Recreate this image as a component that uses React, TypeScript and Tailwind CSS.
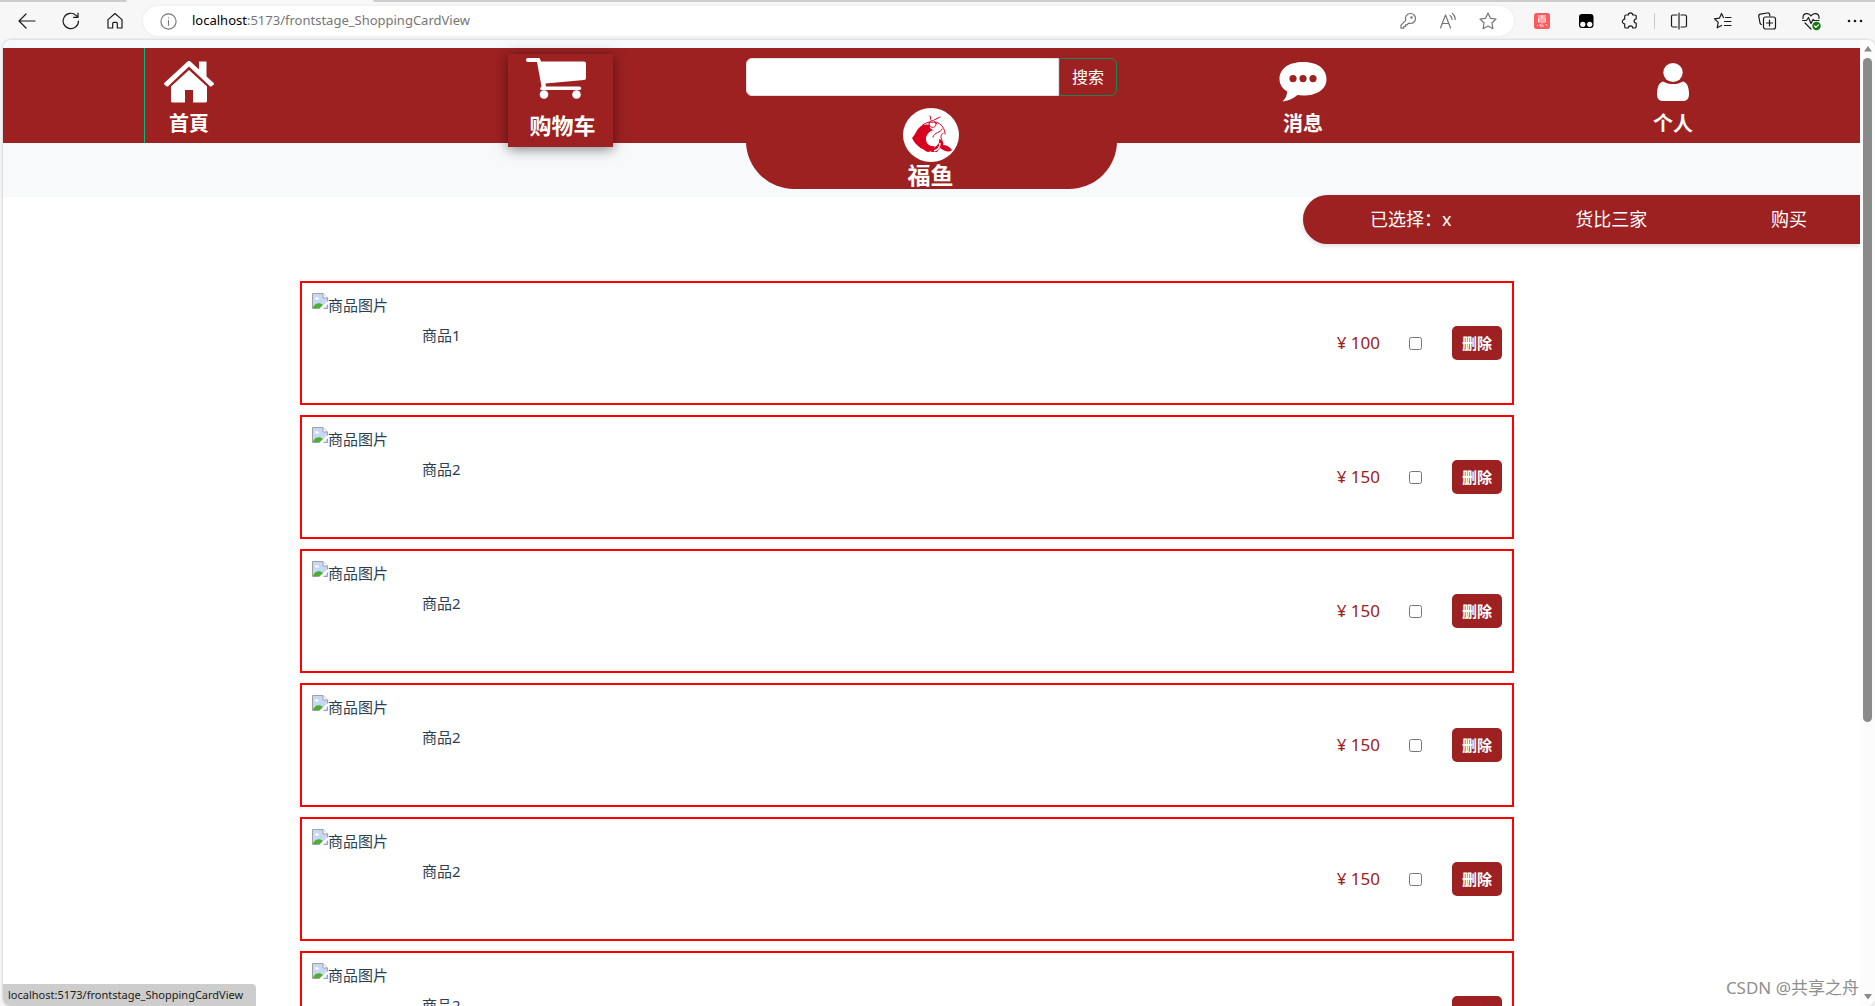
import React, { useState } from 'react';
import type { ReactNode } from 'react';

type Product = {
  id: number;
  name: string;
  price: number;
};

const products: Product[] = [
  { id: 1, name: '商品1', price: 100 },
  { id: 2, name: '商品2', price: 150 },
  { id: 3, name: '商品2', price: 150 },
  { id: 4, name: '商品2', price: 150 },
  { id: 5, name: '商品2', price: 150 },
  { id: 6, name: '商品2', price: 150 },
];

const PAGE_URL = '/frontstage_ShoppingCardView';

function LineIcon({ children, className = 'size-5' }: { children: ReactNode; className?: string }) {
  return (
    <svg
      viewBox="0 0 20 20"
      fill="none"
      stroke="currentColor"
      strokeWidth="1.2"
      strokeLinecap="round"
      strokeLinejoin="round"
      className={className}
    >
      {children}
    </svg>
  );
}

function ToolButton({ label, children }: { label: string; children: ReactNode }) {
  return (
    <button aria-label={label} title={label} className="flex size-5 items-center justify-center">
      {children}
    </button>
  );
}

function TabStrip() {
  return (
    <div className="flex h-[2px] shrink-0">
      <div className="w-[127px] rounded-br-sm bg-[#cdcdcd]" />
      <div className="w-[246px]" />
      <div className="flex-1 rounded-bl-sm bg-[#cdcdcd]" />
    </div>
  );
}

function BrowserBar() {
  return (
    <div className="flex h-[38px] shrink-0 items-center pr-[10px] pl-[17px] text-[#1b1b1b]">
      <div className="flex w-[126px] shrink-0 gap-6">
        <ToolButton label="Back">
          <LineIcon>
            <path d="M18 10H2M9 3L2 10l7 7" />
          </LineIcon>
        </ToolButton>
        <ToolButton label="Refresh">
          <LineIcon>
            <path d="M17.500 10a7.700 7.700 0 1 1-2.400-5.600L17 6.200M17 2v4.400h-4.400" />
          </LineIcon>
        </ToolButton>
        <ToolButton label="Home">
          <LineIcon>
            <path d="M3 8.600L10 2.500l7 6.100V17h-4.700v-4.600a1 1 0 0 0-1-1H8.700a1 1 0 0 0-1 1V17H3z" />
          </LineIcon>
        </ToolButton>
      </div>

      <div className="flex h-[30px] flex-1 items-center rounded-full bg-white px-4 text-[#767676] shadow-[0_0_3px_rgba(0,0,0,0.08)]">
        <LineIcon className="size-[19px]">
          <circle cx="10" cy="10" r="8" />
          <path d="M10 9v5M10 6v.3" />
        </LineIcon>
        <span className="ml-[14px] text-[13px]">
          <span className="text-black">localhost</span>:5173{PAGE_URL}
        </span>
        <div className="ml-auto flex gap-5">
          <ToolButton label="Passwords">
            <LineIcon>
              <path d="M12.500 2.500a5 5 0 0 1 0 10l-2-.3-1.300 1.600H7.500v1.700H5.800v1.700H3v-3l4.800-4.900A5 5 0 0 1 12.500 2.500z" />
              <circle cx="13.500" cy="6.500" r=".7" />
            </LineIcon>
          </ToolButton>
          <ToolButton label="Read aloud">
            <LineIcon>
              <path d="M2.500 17L7.500 4l5 13M4.300 12.500h6.500M12 4.500a5 5 0 0 1 2 4M14.500 2.500a8 8 0 0 1 2.800 6" />
            </LineIcon>
          </ToolButton>
          <ToolButton label="Favorite this page">
            <LineIcon>
              <path d="M10 2l2.400 5.300 5.600.7-4.100 4 1 5.700L10 15l-4.900 2.700 1-5.700L2 8l5.600-.7z" />
            </LineIcon>
          </ToolButton>
        </div>
      </div>

      <div className="ml-[18px] flex items-center gap-6">
        <ToolButton label="Coupons">
          <svg viewBox="0 0 20 20" className="size-5">
            <rect x="2" y="2" width="16" height="16" rx="2.500" fill="#ff5a60" />
            <path
              d="M6 5h8M10 4v4M6.500 7h7v4h-7zM6.500 9h7M5.500 14v1M8 13v2h4M14 13l1 1.500M10 12.500v1"
              stroke="#fff"
              strokeWidth=".9"
              fill="none"
            />
          </svg>
        </ToolButton>
        <ToolButton label="Tampermonkey">
          <svg viewBox="0 0 20 20" className="size-5">
            <rect x="3" y="3" width="14.500" height="14" rx="3" fill="#000" />
            <circle cx="6.800" cy="13.300" r="2.600" fill="#fff" />
            <circle cx="13.700" cy="13.300" r="2.600" fill="#fff" />
          </svg>
        </ToolButton>
        <ToolButton label="Extensions">
          <LineIcon>
            <path d="M6 4h2.300a2.200 2.200 0 0 1 4.400 0H15a1.200 1.200 0 0 1 1.200 1.200V8a2 2 0 0 0 0 4.200v3.300A1.500 1.500 0 0 1 15 17h-2.300a2.200 2.200 0 0 0-4.400 0H6a1.300 1.300 0 0 1-1.300-1.300V12.800a2.300 2.300 0 1 1 0-4.600v-3A1.300 1.300 0 0 1 6 4z" />
          </LineIcon>
        </ToolButton>
        <span className="-mx-[10px] h-4 w-px bg-[#c9c9c9]" />
        <ToolButton label="Split screen">
          <LineIcon>
            <path d="M8 4H4a1.500 1.500 0 0 0-1.500 1.500v9A1.500 1.500 0 0 0 4 16h4M12 4h4a1.500 1.500 0 0 1 1.500 1.500v9A1.500 1.500 0 0 1 16 16h-4M10 2v16" />
          </LineIcon>
        </ToolButton>
        <ToolButton label="Favorites">
          <LineIcon>
            <path d="M10.500 6.500L8.500 2.500l-2 4.600-5 .7 3.700 3.600-1 5.400 4.300-2.400M12.500 6.500H18M11.500 10.500H18M11.500 14.500H18" />
          </LineIcon>
        </ToolButton>
        <ToolButton label="Collections">
          <LineIcon>
            <path d="M4.500 13.500A2 2 0 0 1 3 12L1.800 5.500a2 2 0 0 1 1.600-2.300l7-1.200a2 2 0 0 1 2.300 1.600l.2 1.200" />
            <rect x="6.500" y="6" width="12" height="12" rx="2" />
            <path d="M12.500 9v6M9.500 12h6" />
          </LineIcon>
        </ToolButton>
        <ToolButton label="Browser essentials">
          <LineIcon>
            <path d="M2 7.500C1.500 1.500 8 1.500 10 5c2-3.500 8.500-3.500 8 2.500M1.500 9.500h4l2-3 2.500 6 2-4 1 1h5M4 12l6 6" />
            <circle cx="15.500" cy="15" r="4.200" fill="#107c10" stroke="none" />
            <path d="M13.600 15l1.300 1.300 2.500-2.500" stroke="#fff" />
          </LineIcon>
        </ToolButton>
        <ToolButton label="Settings and more">
          <svg viewBox="0 0 20 20" className="size-5" fill="currentColor">
            <circle cx="4" cy="10" r="1.300" />
            <circle cx="10" cy="10" r="1.300" />
            <circle cx="16" cy="10" r="1.300" />
          </svg>
        </ToolButton>
      </div>
    </div>
  );
}

function HomeIcon() {
  return (
    <svg viewBox="0 0 50 42" fill="#fff" className="h-[42px] w-[50px]">
      <path d="M23.300.7a2.500 2.500 0 0 1 3.400 0L35 8.500V.5h7.500v15l7 6.300a1.300 1.300 0 0 1 0 1.900l-1.900 1.500a1.300 1.300 0 0 1-1.700 0L25 5.500 4.100 25.200a1.300 1.300 0 0 1-1.700 0L.5 23.700a1.300 1.300 0 0 1 0-1.900z" />
      <path d="M25 9l18 16.500V40a1.500 1.500 0 0 1-1.500 1.500H29V29h-8v12.500H8.500A1.500 1.500 0 0 1 7 40V25.500z" />
    </svg>
  );
}

function CartIcon() {
  return (
    <svg viewBox="0 0 60 41" fill="#fff" className="h-[41px] w-[60px]">
      <path d="M2 0h11.500l1.600 3.500H58a2 2 0 0 1 2 2V20a2 2 0 0 1-2 2L19.500 25.500l.5 3h33.500a1.700 1.700 0 0 1 0 3.600H15.500a1.500 1.500 0 0 1-1-2.400l1-1.500L11 4H2a2 2 0 0 1 0-4z" />
      <circle cx="18" cy="36.500" r="4.300" />
      <circle cx="50.500" cy="36.500" r="4.300" />
    </svg>
  );
}

function MessageIcon() {
  return (
    <svg viewBox="0 0 48 40" fill="#fff" className="h-10 w-12">
      <path
        fillRule="evenodd"
        d="M24 0C38 0 47.500 6.500 47.500 17S38 33.500 24 33.500c-2 0-4-.1-5.500-.4C14 37 9 39 3.500 39.500c3-3 4.500-6 4.700-10C3 26.500.5 22 .5 17 .5 6.500 10 0 24 0zM14 13a3.600 3.600 0 1 0 0 7.200 3.600 3.600 0 0 0 0-7.200zm10 0a3.600 3.600 0 1 0 0 7.200 3.600 3.600 0 0 0 0-7.200zm10 0a3.600 3.600 0 1 0 0 7.200 3.600 3.600 0 0 0 0-7.200z"
      />
    </svg>
  );
}

function PersonIcon() {
  return (
    <svg viewBox="0 0 32 39" fill="#fff" className="h-[39px] w-8">
      <ellipse cx="16" cy="9.500" rx="9.700" ry="9.500" />
      <path d="M6 18.500c5.500 3.400 14.500 3.400 20 0 4 .8 6 6 6 12.500 0 4.500-2 7-6 7H6c-4 0-6-2.500-6-7 0-6.500 2-11.700 6-12.500z" />
    </svg>
  );
}

function FishLogo() {
  return (
    <svg viewBox="0 0 56 54" className="h-[54px] w-14">
      <ellipse cx="28" cy="27" rx="28" ry="27" fill="#fff" />
      <path
        d="M9 30c4-4 4-8 8-11 3-3 7-3 10-2-1 3 2 5 4 5-5 1-8 5-8 9 0 5 4 8 9 7-1 3-4 6-7 6-4-1-5-4-8-5-4-2-6-5-8-9z"
        fill="#d9001f"
      />
      <path d="M36 31c4 1 5 4 4 6 3 0 6 1 9 5-3 3-8 1-12-2l-3 4h-6c1-5 10-6 8-13z" fill="#d9001f" />
      <path d="M31 43c4-1 6-4 6-8" fill="none" stroke="#fff" strokeWidth="1.500" />
      <g fill="none" stroke="#d9001f" strokeWidth="1" strokeLinecap="round">
        <path d="M15 32c-2-9 3-17 12-18M33 14c6 2 9 7 9 12M26 16c0-4 6-5 7 0 0 4-6 5-7 0M28 12l-1-4M31 12l6-3M27 14c3 1 5-1 7 2" />
        <path d="M39 21c-1 4-8 3-9 8M40 25c-2 2-3 4-1 7M14 34c1 6 6 8 11 6" />
      </g>
    </svg>
  );
}

function BrokenImage() {
  return (
    <svg viewBox="0 0 16 16" className="size-4 shrink-0">
      <path d="M.5.500h10.500L15.500 5v10.500H.5z" fill="#c6d8f5" stroke="#a0a0a0" />
      <path d="M11 .5V5h4.500" fill="#fff" stroke="#a0a0a0" />
      <path d="M3 5.500c0-1.500 2-2 2.700-.7C7 4.500 7.500 6 6.500 6.500h-3z" fill="#fff" />
      <path d="M1 15c1-4 6-6.500 10-3l-3 3z" fill="#4caf32" />
      <path d="M7 16l9-8v3l-5 5z" fill="#fff" />
    </svg>
  );
}

function NavLink({ label, children }: { label: string; children: ReactNode }) {
  return (
    <a href="#" className="flex flex-col items-center text-[20px] leading-6 font-bold text-white">
      <span className="flex h-11 items-center">{children}</span>
      <span className="mt-2">{label}</span>
    </a>
  );
}

function SiteHeader() {
  return (
    <header className="h-[157px] shrink-0 bg-[#f8f9fb] pt-2">
      <nav className="flex h-[95px] items-start bg-[#9d2121]">
        <div className="ml-[141px] flex h-full w-[364px] border-l border-[#00bd7e] pt-3 pl-[19px]">
          <NavLink label="首頁">
            <HomeIcon />
          </NavLink>
        </div>
        <a
          href="#"
          className="mt-[6px] flex h-[93px] w-[105px] flex-col items-center bg-[#9d2121] pt-1 text-[22px] leading-7 font-bold text-white shadow-[0_2px_12px_rgba(0,0,0,0.5)]"
        >
          <span className="pr-[10px]">
            <CartIcon />
          </span>
          <span className="mt-3 pl-1">购物车</span>
        </a>
        <div className="ml-[133px] flex h-[141px] w-[371px] flex-col items-center rounded-b-[48px] bg-[#9d2121] pt-[10px]">
          <form className="flex h-[38px] w-full" onSubmit={(e) => e.preventDefault()}>
            <input
              type="text"
              aria-label="搜索商品"
              className="min-w-0 flex-1 rounded-l-md border border-[#dee2e6] bg-white px-3 outline-none"
            />
            <button className="w-[58px] rounded-r-md border border-[#198754] text-[16px] text-white">搜索</button>
          </form>
          <a
            href="#"
            className="mt-3 flex flex-col items-center pr-[2px] text-[23px] leading-[26px] font-bold text-white"
          >
            <FishLogo />
            福鱼
          </a>
        </div>
        <div className="flex flex-1 justify-between pt-3 pr-[167px] pl-[162px]">
          <NavLink label="消息">
            <MessageIcon />
          </NavLink>
          <NavLink label="个人">
            <PersonIcon />
          </NavLink>
        </div>
      </nav>
    </header>
  );
}

function ProductRow({ product }: { product: Product }) {
  const [checked, setChecked] = useState(false);

  return (
    <li className="flex h-[124px] shrink-0 items-center border-2 border-[#ff0000] px-[10px] text-[15px] text-[#2c3e50]">
      <div className="flex w-[110px] self-start pt-[10px]">
        <BrokenImage />
        <span className="leading-6">商品图片</span>
      </div>
      <span className="self-start pt-10 leading-6">{product.name}</span>
      <span className="ml-auto text-[17px] text-[#9d2121]">¥ {product.price}</span>
      <input
        type="checkbox"
        aria-label={`选择${product.name}`}
        checked={checked}
        onChange={(e) => setChecked(e.target.checked)}
        className="mr-[30px] ml-[29px] size-[13px]"
      />
      <button className="h-[34px] w-[50px] rounded-[5px] bg-[#9d2121] text-[15px] font-bold text-white">删除</button>
    </li>
  );
}

function Scrollbar() {
  return (
    <div className="flex w-[15px] shrink-0 flex-col items-center bg-[#fcfcfc] py-[6px]">
      <svg viewBox="0 0 8 6" className="h-[6px] w-2" fill="#8a8a8a">
        <path d="M4 0l4 5.500H0z" />
      </svg>
      <div className="mt-[6px] h-[664px] w-[9px] rounded-full bg-[#8a8a8a]" />
      <svg viewBox="0 0 8 6" className="mt-auto h-[6px] w-2" fill="#8a8a8a">
        <path d="M4 5.500L0 0h8z" />
      </svg>
    </div>
  );
}

export default function App() {
  return (
    <div className="relative flex h-screen flex-col overflow-hidden bg-[#f7f7f7] font-['Noto_Sans','Noto_Sans_CJK_SC',sans-serif]">
      <TabStrip />
      <BrowserBar />
      <div className="ml-[3px] flex min-h-0 flex-1 overflow-hidden rounded-l-lg rounded-r-lg bg-white shadow-[0_0_3px_rgba(0,0,0,0.25)]">
        <div className="flex min-w-0 flex-1 flex-col">
          <SiteHeader />
          <div className="-mt-[2px] ml-auto flex h-[49px] w-[557px] shrink-0 items-center justify-between rounded-l-full bg-[#9d2121] pr-[53px] pl-[67px] text-[18px] text-white shadow-[0_2px_5px_rgba(0,0,0,0.14)]">
            <span>已选择：x</span>
            <button>货比三家</button>
            <button>购买</button>
          </div>
          <ul className="mt-[37px] mr-[346px] ml-[297px] flex min-h-0 flex-1 flex-col gap-[10px] overflow-hidden">
            {products.map((product) => (
              <ProductRow key={product.id} product={product} />
            ))}
          </ul>
        </div>
        <Scrollbar />
      </div>

      <div className="absolute bottom-0 left-[3px] flex h-[22px] w-[253px] items-center rounded-tr rounded-bl-lg bg-[#cdcdcd] pl-[5px] text-[11px] text-[#1b1b1b]">
        localhost:5173{PAGE_URL}
      </div>
      <div className="absolute right-4 bottom-[6px] text-[17px] leading-6 text-[#8f8f8f]">CSDN @共享之舟</div>
    </div>
  );
}
